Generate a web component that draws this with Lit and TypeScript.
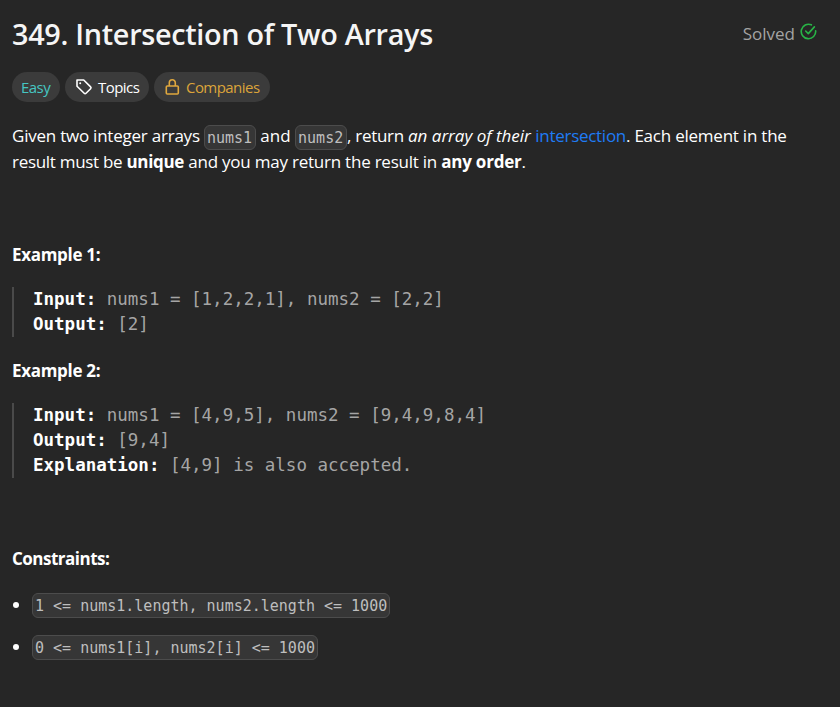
import { LitElement, html, css, svg } from "lit";
import { customElement } from "lit/decorators.js";

@customElement("app-root")
export class AppRoot extends LitElement {
  static styles = css`
    :host { display: block; height: 707px; overflow: hidden; box-sizing: border-box; background: #262626; color: #fff;
      padding: 0 23px 0 12px; font: 17px/26px "Open Sans", "Noto Sans", sans-serif; white-space: nowrap; }
    h1, h2, p, pre, ul { margin: 0; padding: 0; font-size: inherit; }
    header { display: flex; justify-content: space-between; height: 72px; }
    h1 { font-size: 28.8px; line-height: 67px; font-weight: 600; color: #f5f5f5; letter-spacing: -0.3px; }
    .solved { display: flex; align-items: center; height: 67px; gap: 5px; color: #a3a3a3; font-size: 17px; }
    .solved svg { margin-top: -4px; }
    .chips { display: flex; gap: 5px; height: 30px; margin-bottom: 21px; font-size: 15px; }
    .chip { display: flex; align-items: center; box-sizing: border-box; border-radius: 15px; background: #3b3b3b; }
    .easy { width: 48px; padding-left: 9px; color: #46c6c2; }
    .topics { width: 84px; padding-left: 10px; gap: 5px; }
    .companies { width: 116px; padding-left: 10px; gap: 5px; color: #dca43a; }
    .label { letter-spacing: -0.55px; }
    code, pre { font-family: "DejaVu Sans Mono", "Liberation Mono", monospace; }
    code { display: inline-block; box-sizing: border-box; height: 25px; line-height: 24px; padding: 0 2px; border: 1px solid #4c4c4c;
      border-radius: 6px; background: #363636; color: #bebebe; font-size: 15px; letter-spacing: 0; }
    .statement { height: 52px; margin-bottom: 67px; letter-spacing: -0.23px; }
    .line { display: flex; height: 26px; white-space: pre; }
    .line code { margin-top: 2px; width: 52px; }
    .natural { letter-spacing: 0; }
    .tight { letter-spacing: -0.3px; }
    .link { color: #1f7cf5; letter-spacing: -0.28px; }
    h2 { height: 26px; font-weight: 700; letter-spacing: -0.3px; }
    h2.constraints { letter-spacing: -0.5px; }
    pre { box-sizing: border-box; margin: 19px 0 21px; padding-left: 19px; border-left: 2px solid #4a4a4a;
      font-size: 17.5px; line-height: 25px; color: #a5a5a5; }
    pre b { color: #fff; }
    pre.last { margin-bottom: 68px; }
    li { display: flex; align-items: center; height: 25px; margin-bottom: 17px; }
    ul { margin-top: 21px; }
    li::before { content: ""; width: 6px; height: 6px; margin: -1px 13px 0 1px; border-radius: 50%; background: #fff; }
  `;

  private check = svg`<svg width="17" height="17" viewBox="0 0 24 24" fill="none" stroke="#28b446" stroke-width="2.3" stroke-linecap="round" stroke-linejoin="round">
    <path d="M16 2.6A10.2 10.2 0 1 0 22.1 11"/><path d="M8 11.3l3.7 3.7L20.3 5.5"/></svg>`;
  private tag = svg`<svg width="18" height="18" viewBox="0 0 18 18" fill="none" stroke="#fff" stroke-width="1.6" stroke-linejoin="round">
    <path d="M2 2H8.7L15.6 8.9Q16.5 9.8 15.6 10.7L11 15.3Q10.1 16.2 9.2 15.3L2 8.2Z"/><circle cx="5.2" cy="5.2" r="1" fill="#fff" stroke="none"/></svg>`;
  private lock = svg`<svg width="17" height="18" viewBox="0 0 17 18" fill="none" stroke="#e0a83e" stroke-width="1.6" stroke-linejoin="round">
    <rect x="2.3" y="8" width="12" height="8" rx="1"/><path d="M5.3 8V4.7a3 3 0 0 1 6 0V8"/></svg>`;

  render() {
    return html`
      <header><h1>349. Intersection of Two Arrays</h1><div class="solved"><span>Solved</span>${this.check}</div></header>
      <div class="chips">
        <div class="chip easy"><span class="label">Easy</span></div>
        <div class="chip topics">${this.tag}<span class="label">Topics</span></div>
        <div class="chip companies">${this.lock}<span class="label">Companies</span></div>
      </div>
      <p class="statement">
        <span class="line"><span>Given two integer arrays </span><code>nums1</code><span class="natural"> and </span><code>nums2</code><span class="tight">, return </span><i class="natural">an array of their </i><span class="link">intersection</span><span>. Each element in the</span></span>
        <span class="line"><span class="tight">result must be </span><b class="tight">unique</b><span> and you may return the result in </span><b>any order</b><span>.</span></span>
      </p>
      <h2>Example 1:</h2>
      <pre><b>Input:</b> nums1 = [1,2,2,1], nums2 = [2,2]
<b>Output:</b> [2]</pre>
      <h2>Example 2:</h2>
      <pre class="last"><b>Input:</b> nums1 = [4,9,5], nums2 = [9,4,9,8,4]
<b>Output:</b> [9,4]
<b>Explanation:</b> [4,9] is also accepted.</pre>
      <h2 class="constraints">Constraints:</h2>
      <ul>
        <li><code>1 &lt;= nums1.length, nums2.length &lt;= 1000</code></li>
        <li><code>0 &lt;= nums1[i], nums2[i] &lt;= 1000</code></li>
      </ul>`;
  }
}
